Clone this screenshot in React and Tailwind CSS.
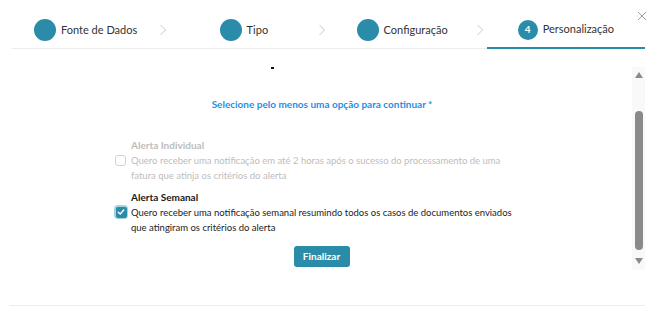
import React from "react";

const steps = [
  { label: "Fonte de Dados" },
  { label: "Tipo" },
  { label: "Configuração" },
  { label: "Personalização", num: "4", active: true },
];

function Chevron() {
  return (
    <svg width="8" height="12" viewBox="0 0 8 12" className="shrink-0">
      <polyline points="1.5,1 6.5,6 1.5,11" fill="none" stroke="#c9c9c9" strokeWidth="1" />
    </svg>
  );
}

function CheckIcon() {
  return (
    <svg width="8" height="8" viewBox="0 0 8 8">
      <polyline points="1.2,4.2 3.2,6 6.8,2" fill="none" stroke="#fff" strokeWidth="1.4" strokeLinecap="round" strokeLinejoin="round" />
    </svg>
  );
}

export default function App() {
  return (
    <div className="relative w-[660px] h-[328px] bg-white font-['Lato',sans-serif] text-[#222]">
      {/* close */}
      <button className="absolute top-[11px] right-[13px] w-[10px] h-[10px]">
        <svg width="10" height="10" viewBox="0 0 10 10">
          <path d="M1 1 L9 9 M9 1 L1 9" stroke="#9a9a9a" strokeWidth="1" />
        </svg>
      </button>

      {/* stepper */}
      <div className="ml-[12px] mr-[15px] flex h-[49px] border-b border-[#ececec]">
        {steps.map((s, i) => (
          <div
            key={i}
            className={`flex-1 flex items-center ${s.active ? "border-b-2 border-[#2a8ca8] -mb-[1px]" : ""}`}
          >
            <div className="flex-1 flex items-center justify-center gap-[5px] pt-[12px]">
              <div
                className={`rounded-full bg-[#2a8ca8] flex items-center justify-center text-white text-[10px] font-bold ${s.num ? "w-[20px] h-[20px]" : "w-[22px] h-[22px]"}`}
              >
                {s.num}
              </div>
              <span className="text-[11px] text-[#333]">{s.label}</span>
            </div>
            {i < 3 && (
              <div className="pt-[12px] pr-[3px]">
                <Chevron />
              </div>
            )}
          </div>
        ))}
      </div>

      {/* body */}
      <div className="flex ml-[12px] mr-[15px]">
        <div className="flex-1 flex flex-col pt-[18px]">
          <div className="ml-[259px] w-[3px] h-[2px] bg-[#111]" />

          <p className="mt-[28px] text-center text-[10px] font-bold text-[#1f8fe6] leading-[15px]">
            Selecione pelo menos uma opção para continuar *
          </p>

          <div className="mt-[26px] ml-[103px] w-[420px] flex flex-col">
            <div>
              <div className="pl-[16px] text-[10px] font-bold text-[#bdbdbd] leading-[15px]">Alerta Individual</div>
              <div className="flex gap-[5px]">
                <div className="mt-[2px] w-[11px] h-[11px] rounded-[3px] border border-[#d2d2d2] bg-white shrink-0" />
                <p className="text-[9.5px] text-[#bdbdbd] leading-[15px]">
                  Quero receber uma notificação em até 2 horas após o sucesso do processamento de uma
                  <br />
                  fatura que atinja os critérios do alerta
                </p>
              </div>
            </div>

            <div className="mt-[7px]">
              <div className="pl-[16px] text-[10px] font-bold text-[#1a1a1a] leading-[15px]">Alerta Semanal</div>
              <div className="flex gap-[3px] -ml-[1px]">
                <div className="w-[14px] h-[14px] rounded-[4px] bg-[#a7d3df] flex items-center justify-center shrink-0">
                  <div className="w-[11px] h-[11px] rounded-[2px] bg-[#2a8ca8] flex items-center justify-center">
                    <CheckIcon />
                  </div>
                </div>
                <p className="text-[9.5px] text-[#222] leading-[15px]">
                  Quero receber uma notificação semanal resumindo todos os casos de documentos enviados
                  <br />
                  que atingiram os critérios do alerta
                </p>
              </div>
            </div>
          </div>

          <div className="mt-[11px] flex justify-center">
            <button className="ml-[-1px] w-[56px] h-[21px] rounded-[3px] bg-[#2a8ca8] text-white text-[10px] font-bold">
              Finalizar
            </button>
          </div>
        </div>

        {/* scrollbar */}
        <div className="mt-[18px] w-[13px] h-[203px] bg-[#f9f9f9] flex flex-col items-center">
          <svg width="8" height="6" viewBox="0 0 8 6" className="mt-[5px]">
            <polygon points="4,0 8,6 0,6" fill="#8a8a8a" />
          </svg>
          <div className="mt-[33px] w-[8px] h-[139px] rounded-full bg-[#8a8a8a]" />
          <svg width="8" height="6" viewBox="0 0 8 6" className="mt-[8px]">
            <polygon points="0,0 8,0 4,6" fill="#8a8a8a" />
          </svg>
        </div>
      </div>

      {/* footer divider */}
      <div className="absolute left-[9px] right-[15px] top-[305px] border-t border-[#ececec]" />
    </div>
  );
}
